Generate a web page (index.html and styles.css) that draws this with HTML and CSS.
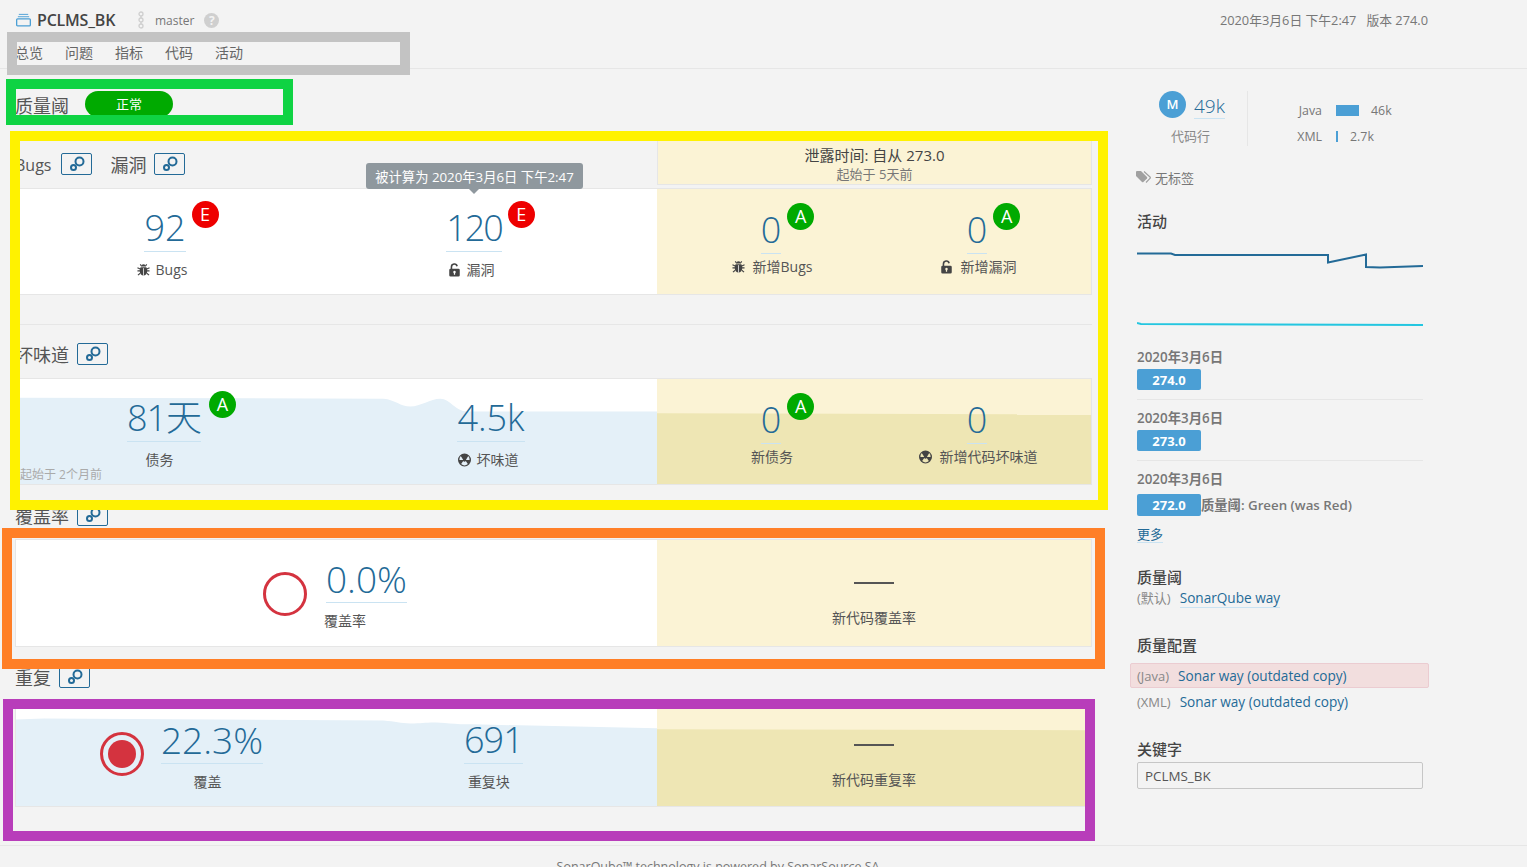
FILE: index.html
```html
<!DOCTYPE html>
<html lang="zh">
<head>
<meta charset="utf-8">
<title>PCLMS_BK</title>
<link rel="stylesheet" href="styles.css">
</head>
<body>
<svg class="defs" width="0" height="0" aria-hidden="true">
  <symbol id="i-link" viewBox="0 0 16 16"><circle cx="10.500" cy="5.500" r="4" fill="none" stroke="currentColor" stroke-width="2"/><circle cx="4.500" cy="11.500" r="2.500" fill="none" stroke="currentColor" stroke-width="2"/></symbol>
  <symbol id="i-bug" viewBox="0 0 14 14"><path fill="currentColor" d="M4.600 3.200a2.400 2.400 0 0 1 4.800 0zM4 4h6c.8 1 1 2.500 1 4.200C11 11 9.400 13 7 13s-4-2-4-4.800C3 6.500 3.200 5 4 4z"/><path stroke="currentColor" stroke-width="1.200" fill="none" d="M3.500 1l1.500 2M10.500 1L9 3M0.500 4.500l3 1.500M13.500 4.500l-3 1.500M0.500 8h3M13.500 8h-3M1 12.500l2.500-2M13 12.500l-2.500-2"/><path stroke="#fff" stroke-width=".8" d="M7 5v8"/></symbol>
  <symbol id="i-lock" viewBox="0 0 14 16"><path fill="none" stroke="currentColor" stroke-width="1.800" d="M3.500 7V4.500a3.300 3.300 0 0 1 6.500-.8"/><path fill="currentColor" fill-rule="evenodd" d="M2.500 6.500h9A1.500 1.500 0 0 1 13 8v6a1.500 1.500 0 0 1-1.500 1.500h-9A1.500 1.500 0 0 1 1 14V8a1.500 1.500 0 0 1 1.500-1.500zM7 8.800a1.500 1.500 0 0 0-.7 2.800V13.500h1.400v-1.900A1.500 1.500 0 0 0 7 8.800z"/></symbol>
  <symbol id="i-smell" viewBox="0 0 14 14"><path fill="currentColor" fill-rule="evenodd" d="M7 0a7 7 0 1 1 0 14A7 7 0 0 1 7 0zM5.500 6.600L3 2.800A5.500 5.500 0 0 0 1.500 7h4a1.500 1.500 0 0 1 0-.4zM8.500 7L11 2.800A5.500 5.500 0 0 1 12.500 7zM5.600 8L3.400 11.300A5.500 5.500 0 0 0 10.600 11.300L8.400 8a1.600 1.600 0 0 1-2.800 0z"/></symbol>
</svg>

<header class="topbar">
  <div class="topline">
    <div class="project">
      <svg class="repo-icon" viewBox="0 0 16 14"><path d="M3 1h10M2 3.500h12" fill="none" stroke="#4b9fd5" stroke-width="1"/><rect x=".7" y="5.700" width="14.600" height="7.600" rx="1" fill="none" stroke="#4b9fd5" stroke-width="1.400"/></svg>
      <span class="project-name">PCLMS_BK</span>
      <svg class="branch-icon" viewBox="0 0 8 18"><g fill="none" stroke="#cfcfcf" stroke-width="1.300"><circle cx="4" cy="3" r="2"/><circle cx="4" cy="9" r="2"/><circle cx="4" cy="15" r="2"/><path d="M4 5v2M4 11v2"/></g></svg>
      <span class="branch">master</span>
      <span class="help">?</span>
    </div>
    <div class="meta"><span>2020年3月6日 下午2:47</span><span>版本 274.0</span></div>
  </div>
  <nav class="nav"><a>总览</a><a>问题</a><a>指标</a><a>代码</a><a>活动</a></nav>
</header>

<div class="layout">
  <main class="content">
    <div class="gate">
      <h2 class="gate-title">质量阈</h2>
      <span class="gate-badge">正常</span>
    </div>

    <div class="head-row">
      <div class="titles">
        <h3 class="sec-title latin">Bugs</h3>
        <a class="link-btn"><svg class="link-icon"><use href="#i-link"/></svg></a>
        <h3 class="sec-title second">漏洞</h3>
        <a class="link-btn"><svg class="link-icon"><use href="#i-link"/></svg></a>
      </div>
      <div class="leak-head">
        <div class="leak-title">泄露时间: 自从 273.0</div>
        <div class="leak-sub">起始于 5天前</div>
      </div>
    </div>
    <section class="panel">
      <div class="col-main measures m-bugs">
        <div class="measure">
          <div class="value-wrap"><span class="value">92</span><span class="rating red">E</span></div>
          <div class="label"><svg class="ico"><use href="#i-bug"/></svg>Bugs</div>
        </div>
        <div class="measure">
          <div class="value-wrap"><span class="value tight">120</span><span class="rating red">E</span></div>
          <div class="label"><svg class="ico"><use href="#i-lock"/></svg>漏洞</div>
        </div>
      </div>
      <div class="col-leak measures m-leak">
        <div class="measure is-leak">
          <div class="value-wrap"><span class="value">0</span><span class="rating green">A</span></div>
          <div class="label"><svg class="ico"><use href="#i-bug"/></svg>新增Bugs</div>
        </div>
        <div class="measure is-leak">
          <div class="value-wrap"><span class="value">0</span><span class="rating green">A</span></div>
          <div class="label"><svg class="ico"><use href="#i-lock"/></svg>新增漏洞</div>
        </div>
      </div>
    </section>

    <div class="divider"></div>
    <div class="titles block-title first-block">
      <h3 class="sec-title">坏味道</h3>
      <a class="link-btn"><svg class="link-icon"><use href="#i-link"/></svg></a>
    </div>
    <section class="panel">
      <div class="col-main measures m-smell">
        <svg class="spark" viewBox="0 0 642 107" preserveAspectRatio="none"><path fill="#e4f0f8" d="M0 19L368 20C380 21 385 28 395 28S415 20 425 20 440 33 452 33L642 33V107H0z"/></svg>
        <div class="measure">
          <div class="value-wrap"><span class="value snug">81天</span><span class="rating green">A</span></div>
          <div class="label shifted">债务</div>
        </div>
        <div class="measure">
          <div class="value-wrap"><span class="value">4.5k</span></div>
          <div class="label"><svg class="ico"><use href="#i-smell"/></svg>坏味道</div>
        </div>
        <div class="since">起始于 2个月前</div>
      </div>
      <div class="col-leak measures m-leak">
        <svg class="spark" viewBox="0 0 435 107" preserveAspectRatio="none"><path fill="#eee6b4" d="M0 35L435 36V107H0z"/></svg>
        <div class="measure is-leak">
          <div class="value-wrap"><span class="value">0</span><span class="rating green">A</span></div>
          <div class="label">新债务</div>
        </div>
        <div class="measure is-leak wide">
          <div class="value-wrap"><span class="value">0</span></div>
          <div class="label"><svg class="ico"><use href="#i-smell"/></svg>新增代码坏味道</div>
        </div>
      </div>
    </section>

    <div class="titles block-title">
      <h3 class="sec-title">覆盖率</h3>
      <a class="link-btn"><svg class="link-icon"><use href="#i-link"/></svg></a>
    </div>
    <section class="panel panel-tall">
      <div class="col-main measures m-cov">
        <span class="donut"></span>
        <div class="measure auto left">
          <div class="value-wrap"><span class="value pct">0.0%</span></div>
          <div class="label">覆盖率</div>
        </div>
      </div>
      <div class="col-leak dash-col">
        <span class="dash"></span>
        <div class="label">新代码覆盖率</div>
      </div>
    </section>

    <div class="titles block-title">
      <h3 class="sec-title">重复</h3>
      <a class="link-btn"><svg class="link-icon"><use href="#i-link"/></svg></a>
    </div>
    <section class="panel panel-short">
      <div class="col-main measures m-dup">
        <svg class="spark" viewBox="0 0 642 107" preserveAspectRatio="none"><path fill="#e4f0f8" d="M0 18L28 17 368 19C380 20 385 22 395 22S410 21 418 21 440 23 458 23L642 27V107H0z"/></svg>
        <span class="bullseye"></span>
        <div class="measure auto">
          <div class="value-wrap"><span class="value pct">22.3%</span></div>
          <div class="label shifted">覆盖</div>
        </div>
        <div class="measure auto gap-dup">
          <div class="value-wrap"><span class="value snug">691</span></div>
          <div class="label shifted">重复块</div>
        </div>
      </div>
      <div class="col-leak dash-col">
        <svg class="spark" viewBox="0 0 435 107" preserveAspectRatio="none"><path fill="#eee6b4" d="M0 28L435 29V107H0z"/></svg>
        <span class="dash"></span>
        <div class="label">新代码重复率</div>
      </div>
    </section>
  </main>

  <aside class="sidebar">
    <div class="stats">
      <div class="loc">
        <div class="loc-top"><span class="size-badge">M</span><span class="loc-value">49k</span></div>
        <div class="loc-label">代码行</div>
      </div>
      <div class="langs">
        <div class="lang"><span class="lang-name">Java</span><span class="bar bar-java"></span><span>46k</span></div>
        <div class="lang"><span class="lang-name">XML</span><span class="bar bar-xml"></span><span>2.7k</span></div>
      </div>
    </div>
    <div class="tags">
      <svg class="tag-icon" viewBox="0 0 15 12"><path fill="#a0a0a0" d="M0 1a1 1 0 0 1 1-1h4l6 6a1 1 0 0 1 0 1.400L7.400 11a1 1 0 0 1-1.400 0L0 5z"/><path fill="none" stroke="#a0a0a0" stroke-width="1.200" d="M8 .5l6 5.500a1 1 0 0 1 0 1.400L10 11.500"/></svg>
      无标签
    </div>
    <h4 class="side-title activity">活动</h4>
    <svg class="chart" viewBox="0 0 286 85">
      <path fill="none" stroke="#236a97" stroke-width="2" d="M0 8.500H34L38 10H191V17.500L229 9.500V22L243 22.500 286 21"/>
      <path fill="none" stroke="#24c6e0" stroke-width="2" d="M0 78L4 79 286 80"/>
    </svg>
    <div class="event">
      <div class="event-date">2020年3月6日</div>
      <div class="event-row"><span class="version">274.0</span></div>
    </div>
    <div class="event">
      <div class="event-date">2020年3月6日</div>
      <div class="event-row"><span class="version">273.0</span></div>
    </div>
    <div class="event last">
      <div class="event-date">2020年3月6日</div>
      <div class="event-row"><span class="version tall">272.0</span><span class="event-text">质量阈: Green (was Red)</span></div>
    </div>
    <a class="more">更多</a>

    <h4 class="side-title gate-head">质量阈</h4>
    <div class="prof-row first"><span class="prof-kind">(默认)</span><a class="prof-link underlined">SonarQube way</a></div>

    <h4 class="side-title prof-head">质量配置</h4>
    <div class="prof-warn"><span class="prof-kind">(Java)</span><a class="prof-link">Sonar way (outdated copy)</a></div>
    <div class="prof-row xml"><span class="prof-kind">(XML)</span><a class="prof-link">Sonar way (outdated copy)</a></div>

    <h4 class="side-title key-head">关键字</h4>
    <input class="key-input" value="PCLMS_BK">
  </aside>
</div>

<footer class="footer">SonarQube™ technology is powered by SonarSource SA</footer>

<div class="tooltip">被计算为 2020年3月6日 下午2:47</div>

<div class="mark mark-gray"></div>
<div class="mark mark-green"></div>
<div class="mark mark-yellow"></div>
<div class="mark mark-orange"></div>
<div class="mark mark-purple"></div>
</body>
</html>
```

FILE: styles.css
```css
* { box-sizing: border-box; }
html, body { margin: 0; height: 867px; overflow: hidden; }
body {
  position: relative;
  background: #f3f3f3;
  color: #444;
  font-family: "Open Sans", "Noto Sans CJK SC", sans-serif;
  font-size: 13px;
}
h2, h3, h4 { margin: 0; font-weight: 400; }
.defs { position: absolute; }

/* header */
.topbar { height: 69px; border-bottom: 1px solid #e6e6e6; padding-left: 15px; }
.topline { display: flex; justify-content: space-between; height: 42px; padding-right: 99px; padding-top: 9px; }
.project { display: flex; align-items: center; height: 22px; }
.repo-icon { width: 15px; height: 14px; margin-left: 1px; margin-right: 6px; }
.project-name { font-size: 16px; font-weight: 600; color: #444; width: 79px; letter-spacing: -.2px; }
.branch-icon { width: 8px; height: 18px; margin-left: 21px; margin-right: 10px; }
.branch { color: #777; font-size: 12px; }
.help { width: 15px; height: 15px; border-radius: 50%; background: #cfcfcf; color: #f3f3f3; font-size: 12px; font-weight: 700; line-height: 15px; text-align: center; margin-left: 10px; }
.meta { display: flex; gap: 10px; color: #777; font-size: 12.8px; line-height: 23px; }
.nav { display: flex; gap: 22px; line-height: 22px; font-size: 14px; color: #666; }

/* layout */
.layout { display: flex; height: 776px; padding-left: 15px; }
.content { width: 1077px; }
.sidebar { width: 286px; margin-left: 45px; }

/* quality gate */
.gate { display: flex; align-items: center; height: 26px; margin-top: 22px; }
.gate-title { font-size: 18px; line-height: 26px; padding-top: 3px; color: #555; width: 70px; }
.gate-badge { width: 88px; height: 26px; border-radius: 13px; background: #00aa00; color: #fff; font-size: 13px; line-height: 26px; text-align: center; }

/* section headers */
.head-row { display: flex; height: 50px; margin-top: 18px; margin-bottom: 3px; }
.titles { display: flex; align-items: center; height: 22px; }
.head-row .titles { width: 642px; margin-top: 18px; }
.block-title { margin-top: 19px; margin-bottom: 13px; }
.first-block { margin-top: 18px; }
.sec-title { font-size: 18px; line-height: 22px; padding-top: 2px; color: #555; margin-right: 8px; }
.sec-title.latin { font-size: 16px; margin-right: 10px; }
.sec-title.second { margin-left: 18px; }
.link-btn { display: flex; align-items: center; justify-content: center; width: 31px; height: 22px; border: 1px solid #236a97; border-radius: 2px; color: #236a97; }
.link-icon { width: 16px; height: 16px; }
.leak-head { width: 435px; background: #fbf3d5; border: 1px solid #e6e6e6; border-top: 0; text-align: center; padding-top: 11px; }
.leak-title { font-size: 15px; line-height: 19px; color: #444; }
.leak-sub { font-size: 13px; line-height: 18px; color: #777; }

/* panels */
.panel { display: flex; height: 107px; border: 1px solid #e6e6e6; background: #fff; }
.panel-tall { height: 108px; }
.panel-short { height: 106px; }
.divider { height: 1px; background: #e6e6e6; margin-top: 29px; }
.col-main { width: 641px; position: relative; }
.col-leak { flex: 1; position: relative; background: #fbf3d5; }
.measures { display: flex; align-items: flex-start; }
.spark { position: absolute; left: 0; top: 0; width: 100%; height: 100%; }
.m-bugs { padding-left: 89px; gap: 189px; }
.m-smell { padding-left: 88px; gap: 207px; }
.m-leak { padding-left: 54px; gap: 86px; }
.m-cov { padding-left: 247px; }
.m-dup { padding-left: 84px; }

.measure { position: relative; width: 120px; display: flex; flex-direction: column; align-items: center; padding-top: 19px; }
.measure.is-leak { padding-top: 21px; }
.measure.auto { width: auto; }
.measure.left { align-items: flex-start; margin-left: 19px; }
.measure.left .label { margin-left: -2px; margin-top: 8px; }
.m-dup .measure.auto { margin-left: 17px; padding-top: 18px; }
.m-dup .measure.gap-dup { margin-left: 201px; }
.value-wrap { position: relative; border-bottom: 1px solid #cae3f2; padding-bottom: 3px; }
.value { display: block; font-size: 36px; font-weight: 300; line-height: 40px; color: #236a97; }
.value.tight { letter-spacing: -2px; }
.value.snug { letter-spacing: -1px; }
.value.pct { font-size: 37px; }
.rating { position: absolute; left: calc(100% + 6px); top: -7px; width: 27px; height: 27px; border-radius: 50%; color: #fff; font-size: 18px; line-height: 27px; text-align: center; }
.snug + .rating { left: calc(100% + 8px); }
.red { background: #ee0000; }
.green { background: #00aa00; }
.label { display: flex; align-items: center; font-size: 14px; line-height: 20px; color: #555; margin-top: 8px; white-space: nowrap; }
.is-leak .label { margin-top: 3px; padding-left: 2px; }
.label.shifted { margin-left: -9px; }
.ico { width: 13px; height: 14px; margin-left: -6px; margin-right: 6px; color: #444; }
.is-leak .ico { margin-left: 0; margin-right: 8px; }
.since { position: absolute; left: 4px; bottom: 0; font-size: 12px; line-height: 18px; color: #aaa; }
.donut { width: 44px; height: 44px; margin-top: 32px; border: 3px solid #d4333f; border-radius: 50%; flex: none; }
.bullseye { position: relative; width: 44px; height: 44px; margin-top: 30px; border: 3px solid #d4333f; border-radius: 50%; flex: none; }
.bullseye::after { content: ""; position: absolute; left: 5px; top: 5px; width: 28px; height: 28px; border-radius: 50%; background: #d4333f; }
.dash-col { display: flex; flex-direction: column; align-items: center; padding-top: 42px; }
.dash { position: relative; width: 40px; height: 2px; background: #555; }
.dash-col .label { position: relative; margin-top: 24px; }

/* sidebar */
.stats { display: flex; height: 55px; margin-top: 22px; }
.loc { width: 111px; border-right: 1px solid #e6e6e6; padding-left: 22px; }
.loc-top { display: flex; align-items: center; height: 27px; }
.size-badge { width: 27px; height: 27px; border-radius: 50%; background: #4b9fd5; color: #fff; font-size: 13px; font-weight: 600; line-height: 27px; text-align: center; margin-right: 8px; flex: none; }
.loc-value { font-size: 19px; font-weight: 300; line-height: 24px; padding-top: 3px; color: #236a97; border-bottom: 1px solid #cae3f2; }
.loc-label { color: #888; line-height: 20px; margin-top: 8px; margin-left: 12px; font-size: 13px; }
.langs { display: flex; flex-direction: column; flex: none; padding-top: 6px; height: 58px; }
.lang { display: flex; align-items: center; flex: none; height: 26px; font-size: 12.4px; color: #777; }
.lang-name { width: 74px; text-align: right; margin-right: 14px; }
.bar { height: 11px; background: #4b9fd5; margin-right: 12px; }
.bar-java { width: 23px; }
.bar-xml { width: 2px; }
.tags { display: flex; align-items: center; gap: 4px; height: 20px; margin: 21px 0 0 -1px; font-size: 13px; color: #777; }
.tag-icon { width: 15px; height: 12px; }
.side-title { font-size: 15px; font-weight: 500; line-height: 20px; color: #444; }
.activity { margin-top: 24px; }
.chart { display: block; width: 286px; height: 85px; margin-top: 14px; margin-bottom: 18px; }
.event { border-bottom: 1px solid #e6e6e6; padding-bottom: 9px; margin-bottom: 9px; }
.event.last { border: 0; padding: 0; margin: 0; }
.event-date { font-size: 13.4px; font-weight: 600; line-height: 18px; color: #777; }
.event-row { display: flex; align-items: center; margin-top: 3px; }
.last .event-row { margin-top: 6px; }
.version { width: 64px; height: 21px; border-radius: 2px; background: #4b9fd5; color: #fff; font-size: 13px; font-weight: 700; line-height: 22px; text-align: center; }
.version.tall { height: 22px; }
.event-text { font-size: 13.3px; font-weight: 600; color: #777; margin-top: -1px; }
.more { display: inline-block; margin-top: 11px; line-height: 15px; color: #236a97; border-bottom: 1px solid #cae3f2; }
.gate-head { margin-top: 24px; }
.prof-row { display: flex; height: 20px; line-height: 20px; align-items: center; }
.prof-row.first { margin-top: 1px; }
.prof-row.xml { margin-top: 4px; }
.prof-kind { color: #888; font-size: 13px; margin-right: 9px; }
.prof-link { color: #236a97; font-size: 13.6px; }
.underlined { border-bottom: 1px solid #cae3f2; line-height: 18px; }
.prof-head { margin-top: 27px; }
.prof-warn { display: flex; align-items: center; height: 25px; margin: 8px -6px 0 -7px; padding-left: 6px; background: #f2dede; border: 1px solid #ebccd1; border-radius: 2px; }
.key-head { margin-top: 27px; }
.key-input { display: block; width: 286px; height: 27px; margin-top: 3px; padding: 0 7px; background: #f3f3f3; border: 1px solid #c6c6c6; border-radius: 2px; color: #555; font: 13.4px "Open Sans", sans-serif; }

/* footer */
.footer { border-top: 1px solid #e6e6e6; padding: 12px 91px 0 0; text-align: center; font-size: 12.5px; line-height: 18px; color: #777; }

/* overlays */
.tooltip { position: absolute; left: 366px; top: 163px; width: 217px; height: 26px; border-radius: 3px; background: #8f989e; color: #fff; font-size: 13.3px; line-height: 29px; text-align: center; white-space: nowrap; }
.tooltip::after { content: ""; position: absolute; left: 103px; top: 26px; border: 5px solid transparent; border-top-color: #8f989e; border-bottom: 0; }
.mark { position: absolute; border: 10px solid; pointer-events: none; }
.mark-gray { left: 7px; top: 32px; width: 403px; height: 43px; border-color: #c3c3c3; }
.mark-green { left: 6px; top: 79px; width: 287px; height: 46px; border-color: #0fd343; }
.mark-yellow { left: 10px; top: 131px; width: 1098px; height: 379px; border-color: #fff200; }
.mark-orange { left: 2px; top: 528px; width: 1103px; height: 141px; border-color: #ff7f27; }
.mark-purple { left: 3px; top: 699px; width: 1092px; height: 142px; border-color: #b83dba; }
```
